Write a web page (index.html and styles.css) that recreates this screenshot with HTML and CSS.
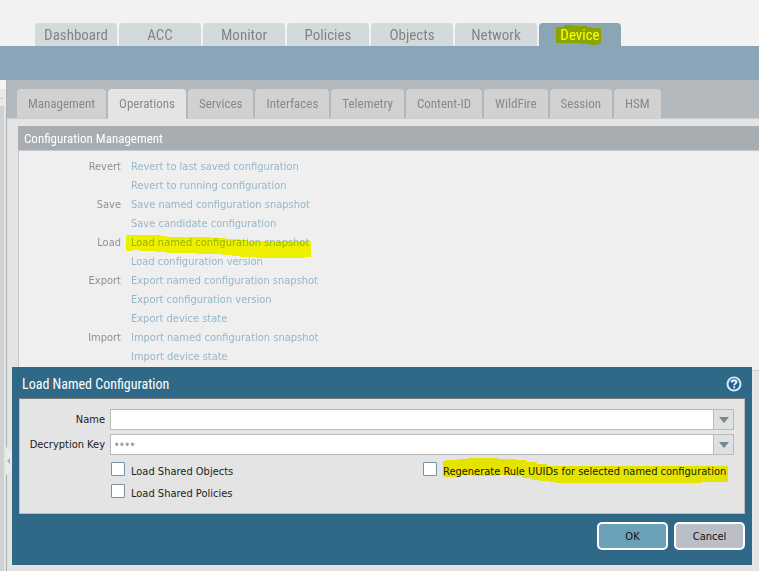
FILE: index.html
```html
<!DOCTYPE html>
<html lang="en">
<head>
  <meta charset="UTF-8" />
  <meta name="viewport" content="width=device-width, initial-scale=1.0" />
  <title>Device - Operations</title>
  <link rel="stylesheet" href="styles.css">
</head>
<body>
  <header class="top">
    <nav class="main-tabs">
      <a href="#">Dashboard</a>
      <a href="#">ACC</a>
      <a href="#">Monitor</a>
      <a href="#">Policies</a>
      <a href="#">Objects</a>
      <a href="#">Network</a>
      <a href="#" class="active"><span class="marked">Device<svg class="marker marker-device" viewBox="0 0 45 20"><path d="M0 2H8V0H17V1H31V2H36V3H45V19H41V20H34V19H24V18H0Z"/></svg></span></a>
    </nav>
  </header>
  <div class="blue-bar"></div>

  <div class="workspace">
    <aside class="sidebar">
      <div class="sidebar-top">-</div>
      <svg class="collapse" viewBox="0 0 6 28"><path d="M0 0L6 5V23L0 28Z" fill="#e9ecec"/><path d="M4 11V17L1 14Z" fill="#a9b0b3"/></svg>
    </aside>
    <main class="content">
      <nav class="sub-tabs">
        <a href="#">Management</a>
        <a href="#" class="active">Operations</a>
        <a href="#">Services</a>
        <a href="#">Interfaces</a>
        <a href="#">Telemetry</a>
        <a href="#">Content-ID</a>
        <a href="#">WildFire</a>
        <a href="#">Session</a>
        <a href="#">HSM</a>
      </nav>

      <section class="panel">
        <h2>Configuration Management</h2>
        <dl class="actions">
          <dt>Revert</dt>
          <dd><a href="#">Revert to last saved configuration</a></dd>
          <dd><a href="#">Revert to running configuration</a></dd>
          <dt>Save</dt>
          <dd><a href="#">Save named configuration snapshot</a></dd>
          <dd><a href="#">Save candidate configuration</a></dd>
          <dt>Load</dt>
          <dd><a href="#" class="marked">Load named configuration snapshot<svg class="marker marker-load" viewBox="0 0 182 23" preserveAspectRatio="none"><path d="M0 0H34V1H40V2H84V3H98V4H112V5H120V6H182V22H175V23H128V22H112V21H104V20H95V19H70V18H40V17H29V16H13V15H7V16H0Z"/></svg></a></dd>
          <dd><a href="#">Load configuration version</a></dd>
          <dt>Export</dt>
          <dd><a href="#">Export named configuration snapshot</a></dd>
          <dd><a href="#">Export configuration version</a></dd>
          <dd><a href="#">Export device state</a></dd>
          <dt>Import</dt>
          <dd><a href="#">Import named configuration snapshot</a></dd>
          <dd><a href="#">Import device state</a></dd>
        </dl>
      </section>
    </main>
  </div>

  <form class="dialog" role="dialog" aria-labelledby="dialog-title">
    <div class="dialog-head">
      <h2 id="dialog-title">Load Named Configuration</h2>
      <button type="button" class="help" aria-label="Help">
        <svg viewBox="0 0 16 16">
          <circle cx="8" cy="8" r="7.5" fill="#dcebf7"/>
          <circle cx="8" cy="8" r="5.5" fill="#1f6296"/>
          <path d="M3 7A5 5 0 0 1 13 7Q8 5 3 7" fill="#4d8dbb"/>
          <path d="M5.8 6.4Q5.9 4.4 8.1 4.4Q10.3 4.4 10.3 6.2Q10.3 7.2 9.2 7.8Q8.2 8.3 8.2 9.4" fill="none" stroke="#fff" stroke-width="1.6"/>
          <rect x="7.3" y="10.4" width="1.8" height="1.8" fill="#fff"/>
        </svg>
      </button>
    </div>
    <div class="dialog-body">
      <label for="name">Name</label>
      <div class="combo">
        <input type="text" id="name" />
        <button type="button" aria-label="Show names"><svg viewBox="0 0 10 6"><path d="M0 0H10L5 6Z"/></svg></button>
      </div>
      <label for="key">Decryption Key</label>
      <div class="combo">
        <input type="password" id="key" value="1234" />
        <button type="button" aria-label="Show keys"><svg viewBox="0 0 10 6"><path d="M0 0H10L5 6Z"/></svg></button>
      </div>
      <div class="checks">
        <div class="check">
          <input type="checkbox" id="objects" />
          <label for="objects">Load Shared Objects</label>
        </div>
        <div class="check">
          <input type="checkbox" id="uuids" />
          <label for="uuids" class="marked">Regenerate Rule UUIDs for selected named configuration<svg class="marker marker-uuids" viewBox="0 0 280 25" preserveAspectRatio="none"><path d="M0 3H3V2H14V1H24V0H54V1H72V2H82V4H92V6H102V8H280V24H254V25H111V24H105V23H95V22H87V20H78V18H69V17H52V18H30V17H17V19H0Z"/></svg></label>
        </div>
        <div class="check">
          <input type="checkbox" id="policies" />
          <label for="policies">Load Shared Policies</label>
        </div>
      </div>
    </div>
    <div class="dialog-buttons">
      <button type="button" class="ok">OK</button>
      <button type="button">Cancel</button>
    </div>
  </form>
</body>
</html>
```
FILE: styles.css
```css
* {
  box-sizing: border-box;
}
body {
  margin: 0;
  min-height: 100vh;
  display: flex;
  flex-direction: column;
  position: relative;
  overflow: hidden;
  background: #e4e4e4;
  font-family: "DejaVu Sans Condensed", "Noto Sans", sans-serif;
  font-size: 11px;
}
a {
  text-decoration: none;
}
h2 {
  margin: 0;
  font-family: "Roboto Condensed", "Roboto", sans-serif;
  font-size: 13px;
  font-weight: normal;
  color: #fff;
}

/* yellow marker strokes */
.marked {
  position: relative;
}
.marker {
  position: absolute;
  fill: #ff0;
  mix-blend-mode: multiply;
  pointer-events: none;
}
.marker-device {
  left: -4px;
  top: -1px;
  width: 45px;
  height: 20px;
}
.marker-load {
  left: -5px;
  top: -1px;
  width: 185px;
  height: 23px;
}
.marker-uuids {
  left: 0;
  top: -3px;
  width: 285px;
  height: 25px;
}

/* top navigation */
.top {
  background: #f2f2f2;
  padding: 23px 0 0 35px;
}
.main-tabs {
  display: flex;
  gap: 2px;
}
.main-tabs a {
  width: 82px;
  height: 23px;
  line-height: 25px;
  text-align: center;
  font-family: "Roboto Condensed", "Roboto", sans-serif;
  font-size: 15px;
  color: #808686;
  background: #d3dadb;
  border-radius: 4px 4px 0 0;
}
.main-tabs .active {
  background: #8aa5b3;
  color: #fff;
}
.blue-bar {
  height: 34px;
  background: #8ba5b8;
}

/* page */
.workspace {
  flex: 1;
  display: flex;
}
.sidebar {
  width: 7px;
  flex: none;
  position: relative;
  background: linear-gradient(to right, #d1d1d1 4px, #e4e4e4 4px);
  border-right: 1px solid #a6afb5;
}
.sidebar-top {
  height: 26px;
  overflow: hidden;
  background: linear-gradient(#f4f4f4 9px, #e8e8e8 9px);
  color: #aaa;
  line-height: 38px;
  font-size: 8px;
}
.collapse {
  position: absolute;
  left: 6px;
  top: 367px;
  width: 6px;
  height: 28px;
}
.content {
  flex: 1;
  min-width: 0;
}
.sub-tabs {
  display: flex;
  gap: 2px;
  height: 39px;
  padding: 9px 0 0 10px;
  background: #b2b8bb;
  border-bottom: 1px solid #c9cbcb;
}
.sub-tabs a {
  padding: 0 11px;
  height: 29px;
  line-height: 29px;
  font-family: "Roboto Condensed", "Roboto", sans-serif;
  font-size: 13px;
  color: #858a8e;
  background: #d1d1d1;
  border-radius: 4px 4px 0 0;
}
.sub-tabs .active {
  height: 30px;
  background: #e4e4e4;
}
.panel {
  margin: 7px 0 0 11px;
  background: #efefef;
  border-bottom: 1px solid #ccc;
}
.panel h2 {
  height: 24px;
  line-height: 25px;
  padding-left: 6px;
  background: #a7adb1;
}
.actions {
  display: grid;
  grid-template-columns: 102px 1fr;
  column-gap: 10px;
  grid-auto-rows: 19px;
  margin: 0;
  padding: 6px 0 4px;
  line-height: 19px;
  border-left: 1px solid #c9c9cc;
  border-top: 1px solid #c9c9cc;
}
.actions dt {
  text-align: right;
  color: #909090;
}
.actions dd {
  grid-column: 2;
  margin: 0;
}
.actions a {
  color: #96b7cb;
}

/* dialog */
.dialog {
  position: absolute;
  left: 12px;
  right: 7px;
  top: 367px;
  padding: 0 7px 15px;
  background: #306987;
}
.dialog-head {
  display: flex;
  justify-content: space-between;
  align-items: center;
  height: 31px;
  padding: 2px 3px 0;
}
.dialog-head h2 {
  font-size: 14px;
}
.help {
  width: 16px;
  height: 16px;
  padding: 0;
  border: 0;
  background: none;
}
.help svg {
  display: block;
}
.dialog-body {
  display: grid;
  grid-template-columns: 80px 1fr;
  gap: 4px 5px;
  align-items: center;
  padding: 10px 10px 8px 5px;
  background: #e4e4e4;
  border: 1px solid #bbb;
  border-top-color: #777;
  color: #222;
}
.dialog-body > label {
  text-align: right;
  white-space: nowrap;
}
.combo {
  display: flex;
  height: 21px;
  border: 1px solid #b9b9b9;
}
.combo input {
  flex: 1;
  min-width: 0;
  border: 0;
  padding: 0 3px;
  background: #fff;
  font-family: "Open Sans", sans-serif;
  font-size: 14px;
  color: #8ca1b1;
}
.combo button {
  width: 20px;
  padding: 0 0 0 1px;
  border: 0;
  border-left: 1px solid #b9b9b9;
  background: #e0e0e0;
}
.combo svg {
  display: block;
  width: 10px;
  height: 6px;
  margin: auto;
  fill: #748894;
}
.checks {
  grid-column: 2;
  display: grid;
  grid-template-columns: 1fr 1fr;
  padding-top: 2px;
}
.check {
  display: flex;
  gap: 6px;
  height: 22px;
  white-space: nowrap;
}
.check input {
  appearance: none;
  width: 14px;
  height: 14px;
  margin: 1px 0 0 1px;
  background: #fff;
  border: 1px solid #7a91a3;
  border-radius: 1px;
}
.check label {
  line-height: 21px;
}
.dialog-buttons {
  display: flex;
  justify-content: flex-end;
  gap: 6px;
  padding-top: 8px;
}
.dialog-buttons button {
  width: 71px;
  height: 28px;
  padding: 0;
  border: 2px solid #fff;
  border-radius: 5px;
  background: #bbbdc7;
  font: inherit;
  color: #111;
}
.dialog-buttons .ok {
  background: #6ba1b9;
}
```
